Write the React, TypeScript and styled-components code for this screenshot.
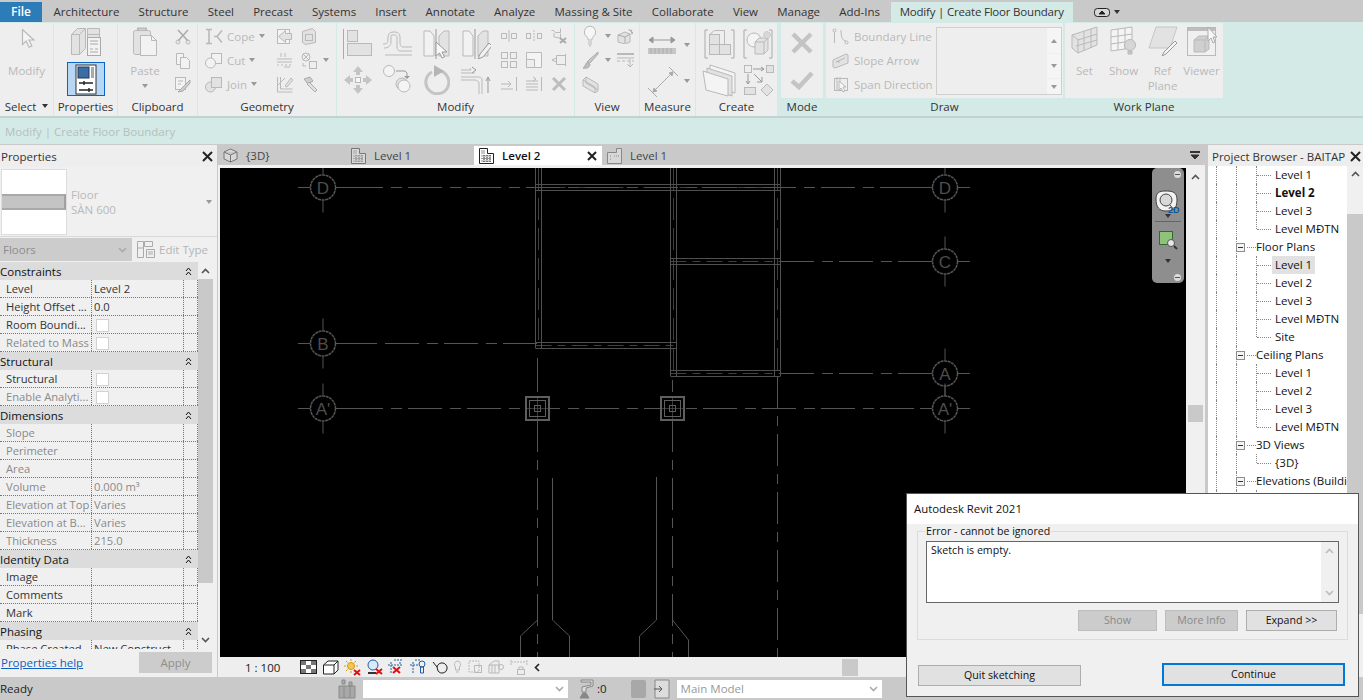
import React from "react";
import styled, { createGlobalStyle } from "styled-components";

const GlobalStyle = createGlobalStyle`
  html, body { margin: 0; padding: 0; height: 100%; overflow: hidden; background: #c9c9c9; }
  body { font-family: "Open Sans", "Noto Sans", sans-serif; font-size: 11.5px; color: #222; }
  * { box-sizing: border-box; }
`;

const Page = styled.div`
  position: relative;
  display: flex;
  flex-direction: column;
  height: 700px;
  width: 1363px;
  overflow: hidden;
`;

/* ---- tab strip ---- */
const TabStrip = styled.div`
  display: flex;
  align-items: stretch;
  height: 22px;
  padding-top: 2px;
  background: #c9c9c9;
`;
const FileTab = styled.div`
  width: 42px;
  margin-right: 2px;
  background: #2b7cb8;
  color: #fff;
  font-weight: 600;
  text-align: center;
  line-height: 20px;
  font-size: 12px;
`;
const Tab = styled.div<{ $active?: boolean }>`
  padding: 0 ${(p) => (p.$active ? 9 : 9.6)}px;
  line-height: 20px;
  white-space: nowrap;
  color: #333;
  letter-spacing: ${(p) => (p.$active ? -0.2 : 0)}px;
  background: ${(p) => (p.$active ? "#d3eae7" : "transparent")};
  margin-left: ${(p) => (p.$active ? 1 : 0)}px;
`;
const ToggleWrap = styled.div`
  display: flex;
  align-items: center;
  gap: 4px;
  margin-left: 21px;
`;

/* ---- ribbon ---- */
const Ribbon = styled.div`
  display: flex;
  height: 96px;
  padding-top: 1px;
  background: #d3eae7;
  border-bottom: 2px solid #c2d2d0;
`;
const Panel = styled.div<{ $w: number; $gap?: number; $tealTitle?: boolean }>`
  display: flex;
  flex-direction: column;
  flex: none;
  width: ${(p) => p.$w}px;
  margin-right: ${(p) => p.$gap ?? 1}px;
  background: ${(p) => (p.$tealTitle ? "transparent" : "#eeeeee")};
`;
const PanelBody = styled.div`
  display: flex;
  height: 75px;
  background: #eeeeee;
  color: #b9b9b9;
`;
const PanelTitle = styled.div`
  display: flex;
  align-items: center;
  justify-content: center;
  gap: 6px;
  height: 18px;
  padding-bottom: 2px;
  color: #333;
  white-space: nowrap;
`;
const Caret = styled.span<{ $dark?: boolean; $up?: boolean }>`
  flex: none;
  display: inline-block;
  width: 0;
  height: 0;
  border-left: 3.5px solid transparent;
  border-right: 3.5px solid transparent;
  border-top: ${(p) => (p.$up ? "0" : `4px solid ${p.$dark ? "#333" : "#999"}`)};
  border-bottom: ${(p) => (p.$up ? `4px solid ${p.$dark ? "#333" : "#999"}` : "0")};
`;
const ToolColumn = styled.div<{ $w?: number }>`
  display: flex;
  flex-direction: column;
  align-items: center;
  width: ${(p) => (p.$w ? `${p.$w}px` : "auto")};
  flex: none;
  padding-top: 3px;
  line-height: 15px;
  text-align: center;
`;
const SelectedTool = styled.div`
  display: flex;
  align-items: center;
  justify-content: center;
  width: 38px;
  height: 34px;
  margin-top: 5px;
  background: #b8d7f3;
  border: 1px solid #0a64c8;
`;
const IconGrid = styled.div<{ $cols: string; $row: number; $top?: number; $left?: number }>`
  display: grid;
  grid-template-columns: ${(p) => p.$cols};
  grid-auto-rows: ${(p) => p.$row}px;
  align-items: center;
  justify-items: center;
  padding-top: ${(p) => p.$top ?? 2}px;
  margin-left: ${(p) => p.$left ?? 0}px;
`;
const ToolRow = styled.div<{ $gap?: number; $left?: number }>`
  display: flex;
  align-items: center;
  justify-self: start;
  gap: ${(p) => p.$gap ?? 4}px;
  margin-left: ${(p) => p.$left ?? 0}px;
  white-space: nowrap;
`;
const ListBox = styled.div`
  display: flex;
  justify-content: flex-end;
  width: 126px;
  height: 68px;
  margin: 4px 0 0 1px;
  border: 1px solid #cfcfcf;
`;
const ListArrows = styled.div`
  display: flex;
  flex-direction: column;
  justify-content: space-between;
  width: 14px;
`;
const ListArrow = styled.div<{ $h: number }>`
  display: flex;
  align-items: center;
  justify-content: center;
  height: ${(p) => p.$h}px;
  background: #f5f5f5;
`;
const ToolLabel = styled.span<{ $top: number }>`
  margin-top: ${(p) => p.$top}px;
`;
const ToolIconSlot = styled.div<{ $h: number }>`
  height: ${(p) => p.$h}px;
`;

/* ---- options bar ---- */
const OptionsBar = styled.div`
  height: 26px;
  padding-left: 5px;
  line-height: 27px;
  background: #d3eae7;
  color: #b5bfbe;
`;

/* ---- work area ---- */
const Workspace = styled.div`
  display: flex;
  flex: 1;
  min-height: 0;
  border-top: 1px solid #c9c9c9;
  background: #c9c9c9;
`;
const PropertiesPanel = styled.div`
  display: flex;
  flex-direction: column;
  flex: none;
  width: 217px;
  background: #f0f0f0;
`;
const DockHeader = styled.div<{ $pad?: number; $h?: number; $inset?: number }>`
  display: flex;
  align-items: center;
  justify-content: space-between;
  flex: none;
  height: ${(p) => p.$h ?? 22}px;
  padding: ${(p) => (p.$h ? 1 : 0)}px ${(p) => p.$pad ?? 4}px 0 ${(p) => p.$inset ?? 1}px;
  background: #eeeeee;
  color: #333;
  white-space: nowrap;
`;
const TypeSelector = styled.div`
  display: flex;
  align-items: center;
  height: 70px;
  padding: 0 5px 0 1px;
  border-bottom: 1px solid #d8d8d8;
`;
const Thumb = styled.div`
  display: flex;
  align-items: center;
  width: 66px;
  height: 66px;
  background: #fff;
  border: 1px solid #dddddd;
`;
const ThumbBand = styled.div`
  width: 100%;
  height: 16px;
  background: #c4c4c4;
  border-top: 2px solid #a9a9a9;
  border-bottom: 2px solid #a9a9a9;
  border-right: 2px solid #a0a0a0;
`;
const TypeName = styled.div`
  flex: 1;
  padding-left: 4px;
  color: #b9b9b9;
  line-height: 15px;
`;
const FilterRow = styled.div`
  display: flex;
  align-items: center;
  height: 25px;
`;
const FilterCombo = styled.div`
  display: flex;
  align-items: center;
  justify-content: space-between;
  width: 132px;
  height: 23px;
  padding: 0 5px 0 3px;
  background: #cccccc;
  color: #8c8c8c;
`;
const EditType = styled.div`
  display: flex;
  align-items: center;
  gap: 4px;
  margin-left: 5px;
  color: #b5b5b5;
`;
const TableWrap = styled.div`
  display: flex;
  height: 387px;
  overflow: hidden;
`;
const Table = styled.div`
  width: 198px;
  flex: none;
`;
const GroupRow = styled.div`
  display: flex;
  align-items: center;
  justify-content: space-between;
  height: 18px;
  padding-right: 6px;
  background: #dcdcdc;
  color: #111;
`;
const Row = styled.div`
  display: grid;
  grid-template-columns: 92px 92px 14px;
  height: 18px;
  border-bottom: 1px dotted #777;
`;
const Cell = styled.div<{ $tone?: string; $ruled?: boolean; $indent?: number }>`
  display: flex;
  align-items: center;
  padding-left: ${(p) => p.$indent ?? 2}px;
  overflow: hidden;
  white-space: nowrap;
  font-size: 11.2px;
  color: ${(p) => p.$tone ?? "#333"};
  border-right: ${(p) => (p.$ruled ? "1px dotted #777" : "0")};
`;
const Check = styled.span`
  width: 13px;
  height: 13px;
  margin-left: 2px;
  margin-top: 2px;
  background: #fff;
  border: 1px solid #d2d2d2;
`;
const VScroll = styled.div<{ $w: number; $bg?: string }>`
  display: flex;
  flex-direction: column;
  flex: none;
  width: ${(p) => p.$w}px;
  background: ${(p) => p.$bg ?? "#f0f0f0"};
`;
const ScrollArrow = styled.div<{ $h?: number; $top?: number; $pin?: boolean }>`
  display: flex;
  align-items: ${(p) => (p.$pin ? "flex-start" : "center")};
  justify-content: center;
  flex: none;
  height: ${(p) => p.$h ?? 17}px;
  margin-top: ${(p) => p.$top ?? 0}px;
  padding-top: ${(p) => (p.$pin ? 5 : 0)}px;
`;
const ScrollThumb = styled.div<{ $h: number; $top?: number; $side?: string }>`
  flex: none;
  height: ${(p) => p.$h}px;
  margin: ${(p) => p.$top ?? 0}px ${(p) => p.$side ?? "0"} 0;
  background: #c9c9c9;
`;
const PanelFooter = styled.div`
  display: flex;
  align-items: center;
  justify-content: space-between;
  flex: 1;
  padding: 0 5px 2px 1px;
`;
const HelpLink = styled.a`
  color: #0f5fc4;
  text-decoration: underline;
`;
const ApplyButton = styled.div`
  width: 73px;
  height: 21px;
  line-height: 21px;
  text-align: center;
  background: #cccccc;
  color: #8f8f8f;
`;

const Center = styled.div`
  display: flex;
  flex-direction: column;
  flex: none;
  width: 987px;
  margin-left: 1px;
`;
const DocTabs = styled.div`
  display: flex;
  height: 20px;
  padding-top: 1px;
  background: #c9c9c9;
`;
const DocTab = styled.div<{ $active?: boolean; $w: number }>`
  display: flex;
  align-items: center;
  gap: 8px;
  flex: none;
  width: ${(p) => p.$w}px;
  padding: 0 5px;
  color: ${(p) => (p.$active ? "#111" : "#444")};
  font-weight: ${(p) => (p.$active ? 600 : 400)};
  background: ${(p) => (p.$active ? "#fff" : "transparent")};
`;
const TabClose = styled.span`
  margin-left: auto;
`;
const TabMenu = styled.div`
  margin-left: auto;
  padding: 0 5px;
  display: flex;
  align-items: center;
`;
const ViewArea = styled.div`
  display: flex;
  flex: 1;
  min-height: 0;
  padding: 3px 0 0 2px;
  background: #f0f0f0;
`;
const ViewColumn = styled.div`
  position: relative;
  display: flex;
  flex-direction: column;
  flex: none;
  width: 966px;
`;
const Canvas = styled.div`
  height: 489px;
  background: #000;
  svg { display: block; }
`;
const ViewBar = styled.div`
  display: flex;
  align-items: center;
  flex: 1;
  padding-left: 25px;
  background: #eeeeee;
`;
const Scale = styled.span`
  width: 55px;
  color: #222;
`;
const ViewBarIcons = styled.div`
  display: flex;
  align-items: center;
  gap: 5.6px;
`;
const HThumb = styled.div`
  width: 16px;
  height: 17px;
  margin-left: 302px;
  background: #c9c9c9;
`;
const NavBar = styled.div`
  position: absolute;
  top: 0;
  right: 2px;
  display: flex;
  flex-direction: column;
  align-items: center;
  width: 32px;
  height: 115px;
  padding-top: 22px;
  background: #8e8e8e;
  border-radius: 5px;
`;
const NavDivider = styled.div`
  width: 26px;
  height: 1px;
  margin: 3px 0 8px;
  background: #666;
`;
const NavSpacer = styled.span`
  height: 9px;
  flex: none;
`;
const NavCorner = styled.span<{ $bottom?: boolean }>`
  position: absolute;
  right: 3px;
  ${(p) => (p.$bottom ? "bottom: 2px;" : "top: 3px;")}
  display: flex;
  align-items: center;
  justify-content: center;
  width: 7px;
  height: 7px;
  border-radius: 50%;
  background: #dcdcdc;
  &::before {
    content: "";
    width: 5px;
    border-top: 1px solid #555;
  }
`;

const Gutter = styled.div`
  width: 3px;
  flex: none;
`;
const BrowserPanel = styled.div`
  display: flex;
  flex-direction: column;
  flex: 1;
  min-width: 0;
`;
const TreeWrap = styled.div`
  display: flex;
  flex: 1;
  min-height: 0;
`;
const Tree = styled.div`
  flex: 1;
  min-width: 0;
  overflow: hidden;
  background: #fff;
`;
const TreeRow = styled.div`
  display: flex;
  align-items: center;
  height: 18px;
  white-space: nowrap;
  color: #111;
`;
const Guide = styled.span<{ $w: number; $on?: boolean }>`
  align-self: stretch;
  flex: none;
  width: ${(p) => p.$w}px;
  border-left: ${(p) => (p.$on ? "1px dotted #888" : "1px solid transparent")};
`;
const Branch = styled.span<{ $last?: boolean }>`
  position: relative;
  align-self: stretch;
  flex: none;
  width: 19px;
  &::before {
    content: "";
    position: absolute;
    left: 0;
    top: 0;
    height: ${(p) => (p.$last ? "9px" : "18px")};
    border-left: 1px dotted #888;
  }
  &::after {
    content: "";
    position: absolute;
    left: 1px;
    top: 9px;
    width: 14px;
    border-top: 1px dotted #888;
  }
`;
const Minus = styled.span`
  position: relative;
  display: flex;
  align-items: center;
  justify-content: center;
  flex: none;
  width: 9px;
  height: 9px;
  margin: 0 2px 0 -5px;
  background: #f4f4f4;
  border: 1px solid #8c8c8c;
  &::before {
    content: "";
    width: 5px;
    border-top: 1px solid #333;
  }
`;
const Dots = styled.span`
  flex: none;
  width: 9px;
  border-top: 1px dotted #888;
`;
const TreeText = styled.span<{ $bold?: boolean; $hl?: boolean }>`
  padding: 0 3px;
  margin-left: -3px;
  line-height: 18px;
  font-weight: ${(p) => (p.$bold ? 700 : 400)};
  background: ${(p) => (p.$hl ? "#e1e1e1" : "transparent")};
`;

/* ---- status bar ---- */
const StatusBar = styled.div`
  display: flex;
  align-items: center;
  flex: none;
  height: 23px;
  background: #c9c9c9;
  color: #222;
`;
const Ready = styled.span`
  width: 338px;
`;
const WhiteCombo = styled.div<{ $w: number }>`
  display: flex;
  align-items: center;
  justify-content: space-between;
  width: ${(p) => p.$w}px;
  height: 18px;
  padding: 0 4px;
  background: #fff;
  color: #999;
`;
const StatusGroup = styled.div<{ $left: number }>`
  display: flex;
  align-items: center;
  gap: 2px;
  margin-left: ${(p) => p.$left}px;
`;
const StatusBox = styled.div`
  width: 15px;
  height: 18px;
  background: #a8a8a8;
  border-radius: 2px;
`;

/* ---- dialog ---- */
const Dialog = styled.div`
  position: absolute;
  left: 906px;
  top: 493px;
  display: flex;
  flex-direction: column;
  width: 453px;
  height: 204px;
  background: #f0f0f0;
  border: 1px solid #555;
  color: #111;
  font-size: 10.6px;
`;
const DialogTitle = styled.div`
  height: 30px;
  padding-left: 7px;
  line-height: 30px;
  font-size: 11.4px;
  background: #fff;
`;
const GroupBox = styled.div`
  position: relative;
  display: flex;
  flex-direction: column;
  height: 109px;
  margin: 7px 10px 0;
  padding: 9px 8px 0;
  border: 1px solid #dcdcdc;
`;
const GroupLegend = styled.span`
  position: absolute;
  left: 7px;
  top: -8px;
  padding: 0 1px;
  line-height: 14px;
  background: #f0f0f0;
`;
const MessageBox = styled.div`
  display: flex;
  justify-content: space-between;
  height: 62px;
  padding-left: 4px;
  line-height: 16px;
  background: #fff;
  border: 1px solid #666;
`;
const MessageScroll = styled.div`
  display: flex;
  flex-direction: column;
  justify-content: space-between;
  width: 17px;
  background: #f0f0f0;
  padding: 6px 0;
  align-items: center;
`;
const GroupButtons = styled.div`
  display: flex;
  justify-content: flex-end;
  gap: 8px;
  margin-top: 7px;
  margin-right: 2px;
`;
const DialogButton = styled.div<{ $w: number; $disabled?: boolean; $primary?: boolean }>`
  width: ${(p) => p.$w}px;
  height: ${(p) => (p.$primary ? 23 : 21)}px;
  line-height: ${(p) => (p.$primary ? 18 : 19)}px;
  text-align: center;
  color: ${(p) => (p.$disabled ? "#8a8a8a" : "#111")};
  background: ${(p) => (p.$disabled ? "#cccccc" : "#e1e1e1")};
  border: ${(p) => (p.$primary ? "2px solid #0078d7" : `1px solid ${p.$disabled ? "#bdbdbd" : "#adadad"}`)};
`;
const DialogFooter = styled.div`
  display: flex;
  justify-content: space-between;
  align-items: flex-start;
  margin-top: 23px;
  padding: 0 13px 0 11px;
`;
const FooterLeft = styled.div`
  margin-top: 2px;
`;

const IconSvg = styled.svg<{ $stroke?: string }>`
  display: block;
  flex: none;
  fill: none;
  stroke: ${(p) => p.$stroke ?? "#b9b9b9"};
  stroke-width: 1;
`;

const Ic = ({ w, h, stroke, children }: { w: number; h: number; stroke?: string; children: React.ReactNode }) => (
  <IconSvg width={w} height={h} viewBox={`0 0 ${w} ${h}`} $stroke={stroke}>
    {children}
  </IconSvg>
);

const fillLight = "#e2e2e2";
const fillMid = "#cfcfcf";

// ribbon icons, all drawn by hand in greyed out state
const CursorIcon = () => (
  <Ic w={22} h={24}>
    <path d="M6.5 3.5v15l3.6-3.4 3 6.2 2.8-1.3-3-6h5z" fill="#f4f4f4" strokeWidth="1.2" />
  </Ic>
);
const CubesIcon = () => (
  <Ic w={32} h={31}>
    <path d="M1.5 8.5l6-6h8v20l-6 6h-8z" fill={fillLight} />
    <path d="M1.5 8.5h8v20M9.5 8.5l6-6" />
    <path d="M17.5 2.5h12v12h-12zM17.5 8.5h12" fill={fillLight} />
    <rect x="17.5" y="11.5" width="13" height="18" fill="#f2f2f2" stroke="#aaa" />
    <path d="M20 15h8M20 18h8M20 23h3M25 23h3M20 26h8" stroke="#aaa" />
  </Ic>
);
const PropertiesIcon = () => (
  <Ic w={22} h={31} stroke="#1e3a5f">
    <rect x="1" y="1" width="20" height="29" fill="#fff" stroke="#333" />
    <rect x="3" y="3" width="11" height="11" fill="#3a6ea5" stroke="#1e3a5f" />
    <rect x="16" y="3" width="3" height="11" fill="#aaa" stroke="none" />
    <path d="M4 19h14M4 26h14M9 17v4M14 24v4" stroke="#222" strokeWidth="1.4" />
  </Ic>
);
const PasteIcon = () => (
  <Ic w={26} h={31}>
    <rect x="1.5" y="4.5" width="17" height="24" rx="2" fill={fillLight} />
    <path d="M6 4.500v-2h8v2" strokeWidth="2" />
    <path d="M8.500 9.500h11l5 5v15h-16z" fill="#f2f2f2" />
    <path d="M19.500 9.500v5h5" />
  </Ic>
);
const ScissorsIcon = () => (
  <Ic w={16} h={16}>
    <path d="M3 1l10 11M13 1L3 12" strokeWidth="1.5" stroke="#aaa" />
    <circle cx="3" cy="13" r="2" />
    <circle cx="13" cy="13" r="2" />
  </Ic>
);
const CopyIcon = () => (
  <Ic w={16} h={16}>
    <path d="M1.500.5h7v11h-7z" fill="#f2f2f2" />
    <path d="M5.500 4.500h6l3 3v8h-9z" fill="#f2f2f2" />
  </Ic>
);
const BrushIcon = () => (
  <Ic w={16} h={16}>
    <rect x="0.500" y="0.500" width="10" height="12" fill="#f2f2f2" />
    <path d="M3 4h5M3 7h3" />
    <path d="M15 3L7 11l-4 4 5-1 7-8z" fill={fillMid} stroke="#aaa" />
  </Ic>
);
const CopeIcon = () => (
  <Ic w={18} h={17}>
    <path d="M1 1.500h6M1 15.500h6M4 1.500v14M12 8.500l5-6M12 8.500l5 6M9 8.500h4" strokeWidth="1.6" />
  </Ic>
);
const CutIcon = () => (
  <Ic w={18} h={17}>
    <rect x="6.500" y="1.500" width="10" height="10" fill="#f2f2f2" />
    <circle cx="5.500" cy="11" r="5" fill="#f2f2f2" />
  </Ic>
);
const JoinIcon = () => (
  <Ic w={18} h={17}>
    <circle cx="5.500" cy="11" r="5" fill={fillLight} />
    <rect x="6.500" y="1.500" width="10" height="10" fill={fillLight} />
  </Ic>
);
const ArrowBoxIcon = () => (
  <Ic w={17} h={17}>
    <rect x="1.500" y="1.500" width="12" height="14" fill="#f4f4f4" />
    <path d="M15.500 5.500h-6v-3l-7 6 7 6v-3h6z" fill={fillLight} />
  </Ic>
);
const BoxPlateIcon = () => (
  <Ic w={15} h={17}>
    <path d="M1.500 3.500l10-3 3 3v11l-10 2-3-2z" fill={fillLight} />
    <rect x="4.500" y="6.500" width="7" height="6" />
  </Ic>
);
const HatchIcon = () => (
  <Ic w={17} h={17}>
    <path d="M1 7h15M1 10h15M1 13h2M5 13h2M9 13h2M13 13h2M5 1v4M9 1v4M8 15h6" />
  </Ic>
);
const ShapesIcon = () => (
  <Ic w={17} h={17}>
    <circle cx="5" cy="5" r="4" />
    <path d="M2 2l6 6M8 2L2 8" />
    <rect x="8.500" y="9.500" width="7" height="7" />
    <path d="M2 11v3h3" />
  </Ic>
);
const GridAngleIcon = () => (
  <Ic w={17} h={17}>
    <path d="M1.500 1v15h15M4.500 1v12h12M1 10l8-8" />
    <path d="M9 10l6-8 2 2-6 7z" fill={fillLight} />
  </Ic>
);
const HammerIcon = () => (
  <Ic w={17} h={17}>
    <path d="M3 3l6-2 3 4-5 3z" fill={fillMid} stroke="#aaa" />
    <path d="M8 6l8 8-2 2-8-8z" fill={fillLight} stroke="#aaa" />
  </Ic>
);
const AlignIcon = () => (
  <Ic w={30} h={30}>
    <path d="M.5 0v30" stroke="#aaa" />
    <rect x="4.500" y="1.500" width="10" height="11" fill={fillLight} />
    <rect x="4.500" y="14.500" width="24" height="12" fill={fillLight} />
  </Ic>
);
const OffsetIcon = () => (
  <Ic w={31} h={26}>
    <path d="M30 16H21c-2 0-3-2-3-4V6c0-3-2-5-5-5H11C8 1 6 3 6 6v3c0 2-1 4-3 4H1" />
    <path d="M30 20H18c-2 0-3-2-3-4V6c0-1-1-2-2-2H10C9 4 9 5 9 6v5c0 4-3 6-7 6" />
    <path d="M30 24H3" />
  </Ic>
);
const MirrorIcon = ({ pen }: { pen?: boolean }) => (
  <Ic w={30} h={30}>
    <path d="M2 2h6l4 5v20H2z" fill="#f2f2f2" />
    <path d="M14 0v30" stroke="#999" />
    <path d="M27 2h-5l-5 5v20h10z" fill={fillLight} />
    {pen ? (
      <path d="M28 14l-9 11-2 5 5-2 9-11z" fill="#f2f2f2" stroke="#999" />
    ) : (
      <path d="M14 13v14l3.500-3 2.500 5 2.500-1-2.500-5h5z" fill="#f8f8f8" stroke="#999" />
    )}
  </Ic>
);
const MoveIcon = () => (
  <Ic w={30} h={30}>
    <path d="M15 1l5 6h-3v3h-4V7h-3zM15 29l5-6h-3v-3h-4v3h-3zM1 15l6-5v3h3v4H7v3zM29 15l-6-5v3h-3v4h3v3z" fill="#c4c4c4" stroke="none" />
    <rect x="12.500" y="12.500" width="5" height="5" fill="#f8f8f8" />
  </Ic>
);
const CopyMoveIcon = () => (
  <Ic w={28} h={30}>
    <circle cx="6" cy="6" r="5.500" fill="#f4f4f4" />
    <path d="M13 6h9l2 2v5" stroke="#999" />
    <path d="M21 11h6l-3 3z" fill="#999" stroke="none" />
    <circle cx="19" cy="19" r="6" fill={fillLight} />
    <circle cx="21" cy="21" r="6" fill="#f4f4f4" />
  </Ic>
);
const RotateIcon = () => (
  <Ic w={27} h={30}>
    <path d="M9 7a11.500 11.500 0 1 0 8-1" strokeWidth="3" stroke="#c4c4c4" />
    <path d="M11 0l10 6-10 6z" fill="#b5b5b5" stroke="none" />
  </Ic>
);
const TrimIcon = () => (
  <Ic w={30} h={30}>
    <path d="M0 8h14M0 5h10l-1-2M0 12h18c2 0 3 1 3 3v14M0 15h14c2 0 4 2 4 3v11" />
    <path d="M11 2l4 3-4 3M27 28V13M25 16l2-4 2 4" stroke="#999" />
  </Ic>
);
const SmallIcon = ({ kind }: { kind: number }) => {
  switch (kind) {
    case 0:
      return (
        <Ic w={16} h={12}>
          <path d="M8 0v12M.5 3.500h5v5h-5zM10.500 3.500h5v5h-5z" />
        </Ic>
      );
    case 1:
      return (
        <Ic w={16} h={12}>
          <rect x=".5" y="3.500" width="4" height="5" />
          <rect x="11.500" y="3.500" width="4" height="5" />
          <path d="M8 0v12" strokeDasharray="2 1" />
        </Ic>
      );
    case 2:
      return (
        <Ic w={16} h={16}>
          <path d="M.5 2.500h2l2 2h5V.5M9.500 10.500v-5M3 5v4l6 1" />
          <path d="M9 10l6 5M15 10l-6 5" strokeWidth="2" stroke="#aaa" />
        </Ic>
      );
    case 3:
      return (
        <Ic w={16} h={16}>
          <rect x=".5" y=".5" width="6" height="6" />
          <rect x="9.500" y=".5" width="6" height="6" />
          <rect x=".5" y="9.500" width="6" height="6" />
          <rect x="9.500" y="9.500" width="6" height="6" />
        </Ic>
      );
    case 4:
      return (
        <Ic w={16} h={16}>
          <path d="M.5 7.500v8h8v-8zM4.500 7.500h4v4" />
          <path d="M.5 .5h15v15h-7v-8h-8z" fill="#f4f4f4" />
        </Ic>
      );
    case 5:
      return (
        <Ic w={15} h={14}>
          <path d="M14.500 1v12M5.500 2.500h9v9h-9zM5.500 5L1 7l4.500 2" />
        </Ic>
      );
    case 6:
      return (
        <Ic w={16} h={16}>
          <path d="M15.500 1v14M0 8h10M7 5l3 3-3 3M0 13h12" />
        </Ic>
      );
    case 7:
      return (
        <Ic w={16} h={16}>
          <path d="M15.500 1v14M0 5h12M0 8h12M0 11h12M0 14h12M7 1l3 2-3 2" />
        </Ic>
      );
    default:
      return (
        <Ic w={14} h={14}>
          <path d="M1 1l12 12M13 1L1 13" strokeWidth="3" stroke="#bdbdbd" />
        </Ic>
      );
  }
};
const BulbIcon = () => (
  <Ic w={14} h={22}>
    <path d="M7 1a6 6 0 0 0-3 11c1 1 1 2 1 3h4c0-1 0-2 1-3A6 6 0 0 0 7 1z" fill="#f6f6f6" />
    <path d="M5 17h4M5 19h4M6 21h2" />
  </Ic>
);
const RenderBoxIcon = () => (
  <Ic w={17} h={15}>
    <path d="M1 6l7-3 5 2v8l-5 2-7-2z" fill={fillLight} />
    <path d="M8 8v6M1 6l7 2 5-3M12 0l1 2 2-1-1 2 2 1-2 1" stroke="#aaa" />
  </Ic>
);
const PaintIcon = () => (
  <Ic w={17} h={18}>
    <path d="M16 1L7 9l-2 2 2 2 2-2 7-8z" fill="#c8c8c8" stroke="#aaa" />
    <path d="M6 11c-3 1-2 4-5 6 4 1 7-1 7-4z" fill="#bdbdbd" stroke="#aaa" />
  </Ic>
);
const LinesIcon = () => (
  <Ic w={17} h={15}>
    <path d="M0 1h17" strokeWidth="2" />
    <path d="M0 5h17M0 8h3M5 8h3M10 8h3M15 8h2M13 6v7M10 11l3 3 3-3" />
  </Ic>
);
const SectionBoxIcon = () => (
  <Ic w={17} h={18}>
    <path d="M1 5l3-3 12 7v7l-3 2L1 11z" fill={fillLight} />
    <path d="M4 2v6l12 7M1 5l12 7v6" />
  </Ic>
);
const DimensionIcon = () => (
  <Ic w={30} h={20}>
    <path d="M2 5h26M2 5l4-3v6zM28 5l-4-3v6z" fill="#999" stroke="#999" />
    <rect x="1" y="13" width="28" height="6" fill="#c6c6c6" stroke="none" />
    <path d="M4 13v6M8 13v6M12 13v6M16 13v6M20 13v6M24 13v6" stroke="#aaa" />
  </Ic>
);
const TagDimIcon = () => (
  <Ic w={31} h={31}>
    <path d="M1 22l9 9M22 1l9 9M6 26L26 6" stroke="#aaa" />
    <path d="M6 26l1-4 3 3zM26 6l-1 4-3-3z" fill="#aaa" stroke="#aaa" />
  </Ic>
);
const ComponentIcon = () => (
  <Ic w={31} h={30}>
    <path d="M4 1H1v28h3M27 1h3v28h-3" stroke="#aaa" />
    <rect x="5.500" y="5.500" width="10" height="10" fill={fillLight} />
    <rect x="15.500" y="15.500" width="11" height="10" fill={fillLight} />
    <rect x="5.500" y="15.500" width="10" height="10" fill={fillLight} />
    <path d="M5.500 5.500l5-4h10v14" />
  </Ic>
);
const InPlaceIcon = () => (
  <Ic w={30} h={30}>
    <path d="M4 1H1v28h3M26 1h3v28h-3" stroke="#aaa" />
    <circle cx="11" cy="11" r="7" fill="#f4f4f4" />
    <path d="M12 13l4-4h9v12l-4 4h-9z" fill={fillLight} />
    <path d="M12 13h9v12M21 13l4-4" />
    <circle cx="24" cy="6" r="3.500" fill="#d8d8d8" strokeDasharray="1 1" />
  </Ic>
);
const SheetsIcon = () => (
  <Ic w={34} h={33}>
    <path d="M8 1l25 8v20L8 21z" fill="#f4f4f4" />
    <path d="M5 4l25 8v20L5 24z" fill={fillLight} />
    <path d="M1 7l25 8v17L4 26z" fill="#f4f4f4" />
  </Ic>
);
const ModelGroupIcon = () => (
  <Ic w={31} h={33}>
    <rect x="1.500" y="1.500" width="7" height="7" />
    <rect x="23.500" y="1.500" width="7" height="7" fill={fillLight} />
    <path d="M10 5h11M18 3l3 2-3 2" stroke="#999" />
    <path d="M5 10v10M3 17l2 3 2-3M11 10l8 8M19 13v5h-5" stroke="#999" />
    <rect x="1.500" y="23.500" width="11" height="7" fill={fillLight} />
    <path d="M24 20l6 6-6 6-6-6z" fill={fillLight} />
  </Ic>
);
const CancelIcon = () => (
  <Ic w={24} h={24}>
    <path d="M3 3l18 18M21 3L3 21" strokeWidth="4.500" stroke="#c4c4c4" />
  </Ic>
);
const FinishIcon = () => (
  <Ic w={24} h={20}>
    <path d="M2 11l7 6L22 3" strokeWidth="4.500" stroke="#c4c4c4" />
  </Ic>
);
const BoundaryIcon = () => (
  <Ic w={17} h={17}>
    <circle cx="2.500" cy="2.500" r="1.500" />
    <circle cx="14.500" cy="14.500" r="1.500" />
    <path d="M2.500 4v11M9 2c0 8 2 11 5 11" />
  </Ic>
);
const SlopeIcon = () => (
  <Ic w={17} h={17}>
    <path d="M1 8l13-6 2 1v8L3 16l-2-1z" fill={fillLight} />
    <path d="M4 10l9-4M4 10l3-1v2" />
  </Ic>
);
const SpanIcon = () => (
  <Ic w={17} h={17}>
    <rect x="2.500" y="2.500" width="13" height="12" />
    <path d="M5 1v14M8 1v14" />
    <path d="M7 5v9l2-2 2 4 2-1-2-4h3z" fill="#f6f6f6" />
  </Ic>
);
const PlaneSetIcon = () => (
  <Ic w={27} h={28}>
    <path d="M1 9l25-8v18L7 27l-6-5z" fill={fillLight} />
    <path d="M1 9l6 5v13M7 14l19-6M5 20l21-6M13 5v20M20 3v19" />
  </Ic>
);
const PlaneShowIcon = () => (
  <Ic w={28} h={29}>
    <path d="M1 4l21-3v21L1 25z" fill="#f4f4f4" />
    <path d="M1 11l21-3M1 18l21-3M8 3v21M15 2v21" />
    <circle cx="20" cy="19" r="5.500" fill="#d6d6d6" />
    <path d="M18 25h4v3h-4z" fill="#c6c6c6" />
  </Ic>
);
const RefPlaneIcon = () => (
  <Ic w={31} h={30}>
    <path d="M9 1h21l-7 21H2z" fill={fillLight} stroke="#c6c6c6" />
    <path d="M28 15L17 26l-2 4 4-2 11-11z" fill="#f4f4f4" stroke="#999" />
  </Ic>
);
const ViewerIcon = () => (
  <Ic w={30} h={30}>
    <rect x=".5" y="1.500" width="28" height="28" fill="#f0f0f0" />
    <rect x="1" y="2" width="27" height="3" fill="#bdbdbd" stroke="none" />
    <path d="M7 14l5-4h10v13l-4 3H7z" fill="#cfcfcf" />
    <path d="M7 14h11v12M18 14l4-4" />
    <path d="M21 1v14l3-3 2 5 2-1-2-5h4z" fill="#f8f8f8" stroke="#aaa" />
  </Ic>
);

const Closer = ({ size = 11, stroke = "#222" }: { size?: number; stroke?: string }) => (
  <Ic w={size} h={size} stroke={stroke}>
    <path d={`M1 1L${size - 1} ${size - 1}M${size - 1} 1L1 ${size - 1}`} strokeWidth="2" />
  </Ic>
);
const Chevron = ({ up = true, stroke = "#555" }: { up?: boolean; stroke?: string }) => (
  <Ic w={9} h={6} stroke={stroke}>
    <path d={up ? "M1 5l3.500-3.500L8 5" : "M1 1l3.500 3.500L8 1"} strokeWidth="1.6" />
  </Ic>
);
const DoubleChevron = () => (
  <Ic w={7} h={9} stroke="#111">
    <path d="M1 4l2.500-3L6 4M1 8l2.500-3L6 8" />
  </Ic>
);
const Cube3dTabIcon = () => (
  <Ic w={15} h={15} stroke="#777">
    <path d="M7.500 1L14 4v7l-6.500 3L1 11V4zM1 4l6.500 3L14 4M7.500 7v7" fill="#d8d8d8" />
  </Ic>
);
const PlanTabIcon = ({ dark }: { dark?: boolean }) => (
  <Ic w={15} h={16} stroke={dark ? "#222" : "#777"}>
    <path d="M.5 .5h8v5h6v10h-14z" fill={dark ? "#fff" : "#d8d8d8"} />
    <path d="M2.500 3h4M2.500 5h4M2.500 8h10M2.500 10.500h10M2.500 13h10M5 7v8M8 7v8M11 7v8" strokeDasharray="1 1" />
  </Ic>
);
const ElevTabIcon = () => (
  <Ic w={15} h={16} stroke="#888">
    <path d="M.5 4.500h9v-4h5v15h-14z" fill="#d8d8d8" />
    <path d="M3 8h2M3 11h2M7 8h5" strokeDasharray="1 1" />
  </Ic>
);
const MenuLines = () => (
  <Ic w={10} h={9} stroke="#333">
    <path d="M0 1h10" strokeWidth="2" />
    <path d="M1 4h8l-4 4z" fill="#333" />
  </Ic>
);
const RibbonToggle = () => (
  <Ic w={16} h={9} stroke="#222">
    <rect x=".5" y=".5" width="15" height="8" rx="3" fill="#d8d8d8" />
    <path d="M5 6l3-3 3 3z" fill="#222" />
  </Ic>
);

const WheelIcon = () => (
  <Ic w={26} h={24} stroke="#444">
    <path d="M1 9C1 3 4 1 10 1c8 0 12 1 12 9 0 8-3 11-11 11C4 21 1 17 1 9z" fill="#f2f2f2" />
    <circle cx="11" cy="10" r="6" fill="#d8d8d8" />
    <path d="M15 15l4 5" />
    <text x="13" y="23" fontFamily="Liberation Sans, sans-serif" fontSize="9" fontWeight="700" fill="#0f55a5" stroke="none">2D</text>
  </Ic>
);
const ZoomIcon = () => (
  <Ic w={20} h={20} stroke="#2f6b2a">
    <rect x="1.500" y="1.500" width="13" height="13" fill="#8fc27a" />
    <circle cx="13" cy="13" r="3.500" fill="#e8e8e8" stroke="#555" />
    <path d="M16 16l3 3" stroke="#333" strokeWidth="2" />
  </Ic>
);

const DarkCaret = styled(Caret)`
  margin: 6px 0 0;
`;

// view control bar icons
const ViewBarSet = () => (
  <ViewBarIcons>
    <Ic w={17} h={14} stroke="#222">
      <rect x=".5" y=".5" width="16" height="13" fill="#fff" />
      <path d="M1 1h5v4H1zM11 1h5v4h-5zM6 5h5v4H6zM1 9h5v4H1zM11 9h5v4h-5z" fill="#777" stroke="none" />
    </Ic>
    <Ic w={16} h={15} stroke="#222">
      <path d="M.5 5L5 1h10v9l-4 4H.5zM.5 5H11v9M11 5l4-4" fill="#fff" />
    </Ic>
    <Ic w={17} h={17} stroke="#d49a10">
      <circle cx="7" cy="7" r="3.500" fill="#f2c94c" />
      <path d="M7 0v2M7 12v2M0 7h2M12 7h2M2 2l1.500 1.500M12 2l-1.500 1.500M2 12l1.500-1.500" />
      <path d="M10 11l6 5M16 11l-6 5" stroke="#d11" strokeWidth="2" />
    </Ic>
    <Ic w={16} h={16} stroke="#1c5fa8">
      <circle cx="6" cy="6" r="5" fill="#dbeafa" />
      <path d="M1 14h8" stroke="#333" strokeWidth="2" />
      <path d="M9 10l6 5M15 10l-6 5" stroke="#d11" strokeWidth="2" />
    </Ic>
    <Ic w={16} h={16} stroke="#1c5fa8">
      <path d="M0 6h14M3 3v12M6 1h8M12 3v3" strokeDasharray="2 1" />
      <path d="M5 8l7 6M12 8l-7 6" stroke="#d11" strokeWidth="2" />
    </Ic>
    <Ic w={16} h={16} stroke="#1c5fa8">
      <path d="M0 6h8M3 3v12M5 1h6" strokeDasharray="2 1" />
      <circle cx="12" cy="5" r="3" />
      <path d="M10.500 8h3v6h-3z" />
    </Ic>
    <Ic w={16} h={13} stroke="#222">
      <path d="M1 1l4 5a5 5 0 0 1 10 2 5 5 0 0 1-9 2L5 6" />
    </Ic>
    <Ic w={9} h={14}>
      <path d="M4.500 1a3.500 3.500 0 0 0-2 6v3h4V7a3.500 3.500 0 0 0-2-6zM3 12h3" />
    </Ic>
    <Ic w={15} h={14}>
      <path d="M1 1h10v11H1z" strokeDasharray="2 1" />
      <rect x="6.500" y="5.500" width="7" height="7" />
    </Ic>
    <Ic w={16} h={14}>
      <path d="M1 5l5-4h5v12H1zM1 5h10M4 5v8M7 5v8" />
      <circle cx="13" cy="7" r="2.500" />
    </Ic>
    <Ic w={18} h={15}>
      <path d="M1 0v5M17 0v5M1 2h16" strokeDasharray="2 1" />
      <rect x="7.500" y="9.500" width="7" height="5" />
      <path d="M9 9V7h4v2" />
    </Ic>
    <Ic w={6} h={9} stroke="#222">
      <path d="M5 1L1.500 4.500 5 8" strokeWidth="1.6" />
    </Ic>
  </ViewBarIcons>
);

// the drawing shown on the canvas
const gridLine = "#555555";
const Bubble = ({ x, y, label }: { x: number; y: number; label: string }) => (
  <g>
    <circle cx={x} cy={y} r={12.5} stroke={gridLine} strokeWidth="1.5" strokeDasharray="3 .6" fill="#000" />
    <path d={`M${x} ${y - 25}v12M${x} ${y + 13}v12M${x - 25} ${y}h12M${x + 13} ${y}h12`} stroke={gridLine} />
    <text x={x} y={y + 6} textAnchor="middle" fontFamily="Liberation Sans, sans-serif" fontSize="17" fill="#4d4d4d" stroke="none">
      {label}
    </text>
  </g>
);
const Column = ({ x, y }: { x: number; y: number }) => (
  <g stroke="#5f5f5f" fill="#000">
    <rect x={x - 11.5} y={y - 11.5} width={23} height={23} strokeWidth="2" />
    <rect x={x - 8} y={y - 8} width={16} height={16} />
    <rect x={x - 3} y={y - 3} width={6} height={6} />
    <path d={`M${x - 11} ${y}h22M${x} ${y - 11}v22`} strokeWidth=".6" />
  </g>
);
const WallH = ({ x1, x2, y }: { x1: number; x2: number; y: number }) => (
  <g stroke="#505050">
    <path d={`M${x1} ${y}H${x2}M${x1} ${y + 6}H${x2}`} />
    <path d={`M${x1} ${y + 3}H${x2}`} strokeDasharray="16 6 8 6" strokeWidth=".8" />
  </g>
);
const WallV = ({ x, y1, y2 }: { x: number; y1: number; y2: number }) => (
  <g stroke="#505050">
    <path d={`M${x} ${y1}V${y2}M${x + 6} ${y1}V${y2}`} />
    <path d={`M${x + 3} ${y1}V${y2}`} strokeDasharray="22 8" strokeWidth=".8" />
  </g>
);
const DrawingSvg = styled.svg`
  fill: none;
  stroke-width: 1;
`;
const Drawing = () => (
  <DrawingSvg width={966} height={489} viewBox="220 168 966 489">
    <g stroke={gridLine}>
      <path d="M348 187.500H383M938 187.500H905" />
      <path d="M391 187.500H960" strokeDasharray="11 6 34 8" />
      <path d="M348 343.500H377M385 343.500H540" strokeDasharray="34 8 11 6" />
      <path d="M348 408.500H383" />
      <path d="M391 408.500H920" strokeDasharray="11 6 34 8" />
      <path d="M780 261.500H920" strokeDasharray="34 8 11 6" />
      <path d="M780 373.500H920" strokeDasharray="34 8 11 6" />
      <path d="M537.500 358V392M672.500 380V392" />
      <path d="M537.500 420V657M672.500 420V657M777.500 376V657" strokeDasharray="32 8 10 8" />
      <path d="M552.500 478V620L569.500 636V657M656.500 477V620L639.500 636V657M672.500 620L688.500 640V657M537.500 620L520.500 636V657" />
    </g>
    <WallH x1={535.5} x2={780.5} y={184.5} />
    <WallV x={535.5} y1={168} y2={348} />
    <WallV x={670.5} y1={168} y2={376} />
    <WallV x={774.5} y1={168} y2={376} />
    <WallH x1={535.5} x2={676.5} y={342.5} />
    <WallH x1={670.5} x2={780.5} y={258.5} />
    <WallH x1={670.5} x2={780.5} y={370.5} />
    <Column x={537.5} y={408.5} />
    <Column x={672.5} y={408.5} />
    <Bubble x={323} y={187.5} label="D" />
    <Bubble x={323} y={343.5} label="B" />
    <Bubble x={323} y={408.5} label="A'" />
    <Bubble x={945} y={187.5} label="D" />
    <Bubble x={945} y={261.5} label="C" />
    <Bubble x={945} y={373.5} label="A" />
    <Bubble x={945} y={408.5} label="A'" />
  </DrawingSvg>
);

const ribbonTabs = ["Architecture", "Structure", "Steel", "Precast", "Systems", "Insert", "Annotate", "Analyze", "Massing & Site", "Collaborate", "View", "Manage", "Add-Ins"];

type PropRow = { group?: string; name?: string; value?: string; check?: boolean; dim?: boolean; valueDim?: boolean };
const propRows: PropRow[] = [
  { group: "Constraints" },
  { name: "Level", value: "Level 2" },
  { name: "Height Offset ...", value: "0.0" },
  { name: "Room Boundi...", check: true },
  { name: "Related to Mass", check: true, dim: true },
  { group: "Structural" },
  { name: "Structural", check: true },
  { name: "Enable Analyti...", check: true, dim: true },
  { group: "Dimensions" },
  { name: "Slope", dim: true },
  { name: "Perimeter", dim: true },
  { name: "Area", dim: true },
  { name: "Volume", value: "0.000 m³", dim: true, valueDim: true },
  { name: "Elevation at Top", value: "Varies", dim: true, valueDim: true },
  { name: "Elevation at B...", value: "Varies", dim: true, valueDim: true },
  { name: "Thickness", value: "215.0", dim: true, valueDim: true },
  { group: "Identity Data" },
  { name: "Image" },
  { name: "Comments" },
  { name: "Mark" },
  { group: "Phasing" },
  { name: "Phase Created", value: "New Construct..." },
];

type TreeItem = { text: string; head?: boolean; last?: boolean; bold?: boolean; hl?: boolean };
const treeItems: TreeItem[] = [
  { text: "Level 1" },
  { text: "Level 2", bold: true },
  { text: "Level 3" },
  { text: "Level MĐTN", last: true },
  { text: "Floor Plans", head: true },
  { text: "Level 1", hl: true },
  { text: "Level 2" },
  { text: "Level 3" },
  { text: "Level MĐTN" },
  { text: "Site", last: true },
  { text: "Ceiling Plans", head: true },
  { text: "Level 1" },
  { text: "Level 2" },
  { text: "Level 3" },
  { text: "Level MĐTN", last: true },
  { text: "3D Views", head: true },
  { text: "{3D}", last: true },
  { text: "Elevations (Building Elevation)", head: true },
  { text: "" },
];

export default function App() {
  return (
    <Page>
      <GlobalStyle />
      <TabStrip>
        <FileTab>File</FileTab>
        {ribbonTabs.map((t) => (
          <Tab key={t}>{t}</Tab>
        ))}
        <Tab $active>Modify | Create Floor Boundary</Tab>
        <ToggleWrap>
          <RibbonToggle />
          <Caret $dark />
        </ToggleWrap>
      </TabStrip>

      <Ribbon>
        <Panel $w={53}>
          <PanelBody>
            <ToolColumn $w={53}>
              <ToolIconSlot $h={37}>
                <CursorIcon />
              </ToolIconSlot>
              <span>Modify</span>
            </ToolColumn>
          </PanelBody>
          <PanelTitle>
            Select <Caret $dark />
          </PanelTitle>
        </Panel>

        <Panel $w={63}>
          <PanelBody>
            <ToolColumn $w={63}>
              <CubesIcon />
              <SelectedTool>
                <PropertiesIcon />
              </SelectedTool>
            </ToolColumn>
          </PanelBody>
          <PanelTitle>Properties</PanelTitle>
        </Panel>

        <Panel $w={79}>
          <PanelBody>
            <ToolColumn $w={54}>
              <PasteIcon />
              <ToolLabel $top={6}>Paste</ToolLabel>
              <DarkCaret />
            </ToolColumn>
            <IconGrid $cols="22px" $row={24}>
              <ScissorsIcon />
              <CopyIcon />
              <BrushIcon />
            </IconGrid>
          </PanelBody>
          <PanelTitle>Clipboard</PanelTitle>
        </Panel>

        <Panel $w={138}>
          <PanelBody>
            <IconGrid $cols="66px 26px 36px" $row={24} $top={1} $left={7}>
              <ToolRow>
                <CopeIcon /> Cope <Caret />
              </ToolRow>
              <ArrowBoxIcon />
              <ToolRow $left={4}>
                <BoxPlateIcon />
              </ToolRow>
              <ToolRow>
                <CutIcon /> Cut <Caret />
              </ToolRow>
              <HatchIcon />
              <ToolRow $gap={5} $left={4}>
                <ShapesIcon /> <Caret />
              </ToolRow>
              <ToolRow>
                <JoinIcon /> Join <Caret />
              </ToolRow>
              <GridAngleIcon />
              <ToolRow $left={4}>
                <HammerIcon />
              </ToolRow>
            </IconGrid>
          </PanelBody>
          <PanelTitle>Geometry</PanelTitle>
        </Panel>

        <Panel $w={237}>
          <PanelBody>
            <IconGrid $cols="repeat(4, 39.500px)" $row={36} $top={3} $left={1}>
              <AlignIcon />
              <OffsetIcon />
              <MirrorIcon />
              <MirrorIcon pen />
              <MoveIcon />
              <CopyMoveIcon />
              <RotateIcon />
              <TrimIcon />
            </IconGrid>
            <IconGrid $cols="repeat(3, 25px)" $row={24} $top={1}>
              <SmallIcon kind={0} />
              <SmallIcon kind={1} />
              <SmallIcon kind={2} />
              <SmallIcon kind={3} />
              <SmallIcon kind={4} />
              <SmallIcon kind={5} />
              <SmallIcon kind={6} />
              <SmallIcon kind={7} />
              <SmallIcon kind={8} />
            </IconGrid>
          </PanelBody>
          <PanelTitle>Modify</PanelTitle>
        </Panel>

        <Panel $w={64}>
          <PanelBody>
            <IconGrid $cols="38px 24px" $row={24} $top={1}>
              <ToolRow $gap={8} $left={8}>
                <BulbIcon /> <Caret />
              </ToolRow>
              <RenderBoxIcon />
              <ToolRow $gap={6} $left={7}>
                <PaintIcon /> <Caret />
              </ToolRow>
              <LinesIcon />
              <ToolRow $left={7}>
                <SectionBoxIcon />
              </ToolRow>
            </IconGrid>
          </PanelBody>
          <PanelTitle>View</PanelTitle>
        </Panel>

        <Panel $w={55}>
          <PanelBody>
            <IconGrid $cols="55px" $row={36} $top={4}>
              <ToolRow $gap={7} $left={7}>
                <DimensionIcon /> <Caret />
              </ToolRow>
              <ToolRow $gap={6} $left={7}>
                <TagDimIcon /> <Caret />
              </ToolRow>
            </IconGrid>
          </PanelBody>
          <PanelTitle>Measure</PanelTitle>
        </Panel>

        <Panel $w={81} $gap={4}>
          <PanelBody>
            <IconGrid $cols="42px 36px" $row={36} $top={3} $left={2}>
              <ComponentIcon />
              <InPlaceIcon />
              <SheetsIcon />
              <ModelGroupIcon />
            </IconGrid>
          </PanelBody>
          <PanelTitle>Create</PanelTitle>
        </Panel>

        <Panel $w={42} $gap={3} $tealTitle>
          <PanelBody>
            <IconGrid $cols="42px" $row={37} $top={1}>
              <CancelIcon />
              <FinishIcon />
            </IconGrid>
          </PanelBody>
          <PanelTitle>Mode</PanelTitle>
        </Panel>

        <Panel $w={237} $gap={2} $tealTitle>
          <PanelBody>
            <IconGrid $cols="103px" $row={24} $top={1} $left={6}>
              <ToolRow $gap={5}>
                <BoundaryIcon /> Boundary Line
              </ToolRow>
              <ToolRow $gap={5}>
                <SlopeIcon /> Slope Arrow
              </ToolRow>
              <ToolRow $gap={5}>
                <SpanIcon /> Span Direction
              </ToolRow>
            </IconGrid>
            <ListBox>
              <ListArrows>
                <ListArrow $h={25}>
                  <Caret $up />
                </ListArrow>
                <ListArrow $h={24}>
                  <Caret />
                </ListArrow>
                <ListArrow $h={15}>
                  <Caret />
                </ListArrow>
              </ListArrows>
            </ListBox>
          </PanelBody>
          <PanelTitle>Draw</PanelTitle>
        </Panel>

        <Panel $w={158} $tealTitle>
          <PanelBody>
            <ToolColumn $w={39}>
              <PlaneSetIcon />
              <ToolLabel $top={9}>Set</ToolLabel>
            </ToolColumn>
            <ToolColumn $w={39}>
              <PlaneShowIcon />
              <ToolLabel $top={8}>Show</ToolLabel>
            </ToolColumn>
            <ToolColumn $w={39}>
              <RefPlaneIcon />
              <ToolLabel $top={7}>
                Ref
                <br />
                Plane
              </ToolLabel>
            </ToolColumn>
            <ToolColumn $w={39}>
              <ViewerIcon />
              <ToolLabel $top={7}>Viewer</ToolLabel>
            </ToolColumn>
          </PanelBody>
          <PanelTitle>Work Plane</PanelTitle>
        </Panel>
      </Ribbon>

      <OptionsBar>Modify | Create Floor Boundary</OptionsBar>

      <Workspace>
        <PropertiesPanel>
          <DockHeader>
            Properties <Closer />
          </DockHeader>
          <TypeSelector>
            <Thumb>
              <ThumbBand />
            </Thumb>
            <TypeName>
              Floor
              <br />
              SÀN 600
            </TypeName>
            <Caret />
          </TypeSelector>
          <FilterRow>
            <FilterCombo>
              Floors <Chevron up={false} stroke="#aaa" />
            </FilterCombo>
            <EditType>
              <Ic w={18} h={17} stroke="#aaa">
                <path d="M.5.5h6v16h-6zM7.500.5h8v5h-8zM.5 7h6M9.500 8.500h8v8h-8zM11 11h5M11 13h5" />
              </Ic>
              Edit Type
            </EditType>
          </FilterRow>
          <TableWrap>
            <Table>
              {propRows.map((r, i) =>
                r.group ? (
                  <GroupRow key={i}>
                    {r.group} <DoubleChevron />
                  </GroupRow>
                ) : (
                  <Row key={i}>
                    <Cell $ruled $indent={6} $tone={r.dim ? "#8a8a8a" : "#333"}>
                      {r.name}
                    </Cell>
                    <Cell $ruled $tone={r.valueDim ? "#8a8a8a" : "#333"}>
                      {r.check ? <Check /> : r.value}
                    </Cell>
                    <Cell $ruled />
                  </Row>
                )
              )}
            </Table>
            <VScroll $w={15}>
              <ScrollArrow>
                <Chevron />
              </ScrollArrow>
              <ScrollThumb $h={304} />
              <ScrollArrow $top={48}>
                <Chevron up={false} />
              </ScrollArrow>
            </VScroll>
          </TableWrap>
          <PanelFooter>
            <HelpLink>Properties help</HelpLink>
            <ApplyButton>Apply</ApplyButton>
          </PanelFooter>
        </PropertiesPanel>

        <Center>
          <DocTabs>
            <DocTab $w={128}>
              <Cube3dTabIcon /> {"{3D}"}
            </DocTab>
            <DocTab $w={128}>
              <PlanTabIcon /> Level 1
            </DocTab>
            <DocTab $active $w={128}>
              <PlanTabIcon dark /> Level 2
              <TabClose>
                <Closer size={10} />
              </TabClose>
            </DocTab>
            <DocTab $w={100}>
              <ElevTabIcon /> Level 1
            </DocTab>
            <TabMenu>
              <MenuLines />
            </TabMenu>
          </DocTabs>
          <ViewArea>
            <ViewColumn>
              <Canvas>
                <Drawing />
              </Canvas>
              <ViewBar>
                <Scale>1 : 100</Scale>
                <ViewBarSet />
                <HThumb />
              </ViewBar>
              <NavBar>
                <NavCorner />
                <WheelIcon />
                <Caret $dark />
                <NavDivider />
                <ZoomIcon />
                <NavSpacer />
                <Caret $dark />
                <NavCorner $bottom />
              </NavBar>
            </ViewColumn>
            <VScroll $w={19}>
              <ScrollArrow $h={18}>
                <Chevron />
              </ScrollArrow>
              <ScrollThumb $h={17} $top={219} $side="2px" />
            </VScroll>
          </ViewArea>
        </Center>

        <Gutter />

        <BrowserPanel>
          <DockHeader $pad={2} $h={21} $inset={4}>
            Project Browser - BAITAP <Closer />
          </DockHeader>
          <TreeWrap>
            <Tree>
              {treeItems.map((t, i) => (
                <TreeRow key={i}>
                  <Guide $w={8} />
                  <Guide $w={20} $on />
                  {t.head ? (
                    <>
                      <Guide $w={5} $on />
                      <Minus />
                      <Dots />
                      <TreeText>{t.text}</TreeText>
                    </>
                  ) : (
                    <>
                      <Guide $w={20} $on />
                      <Branch $last={t.last} />
                      <TreeText $bold={t.bold} $hl={t.hl}>
                        {t.text}
                      </TreeText>
                    </>
                  )}
                </TreeRow>
              ))}
            </Tree>
            <VScroll $w={16}>
              <ScrollArrow $h={48} $pin>
                <Chevron />
              </ScrollArrow>
              <ScrollThumb $h={400} />
            </VScroll>
          </TreeWrap>
        </BrowserPanel>
      </Workspace>

      <StatusBar>
        <Ready>Ready</Ready>
        <Ic w={18} h={20} stroke="#8a8a8a">
          <path d="M4 1h3v4H4zM11 3h3v4h-3zM1 7h16v12H1zM6 7v12M12 7v12" fill="#a8a8a8" />
        </Ic>
        <StatusGroup $left={7}>
          <WhiteCombo $w={205}>
            <span />
            <Chevron up={false} stroke="#aaa" />
          </WhiteCombo>
        </StatusGroup>
        <StatusGroup $left={9}>
          <Ic w={18} h={20} stroke="#888">
            <path d="M4 1h12v6l-7 2v4H5V8l9-2V3H4z" fill="#ddd" />
            <path d="M3 19l3-5h3l3 5z" fill="#888" />
          </Ic>
          <span>:0</span>
        </StatusGroup>
        <StatusGroup $left={24}>
          <StatusBox />
        </StatusGroup>
        <StatusGroup $left={7}>
          <Ic w={17} h={20} stroke="#888">
            <path d="M2 1h14v18H2z" fill="#ddd" />
            <path d="M1 10h8M6 7l3 3-3 3" stroke="#555" />
          </Ic>
        </StatusGroup>
        <StatusGroup $left={7}>
          <WhiteCombo $w={205}>
            <span>Main Model</span>
            <Chevron up={false} stroke="#aaa" />
          </WhiteCombo>
        </StatusGroup>
      </StatusBar>

      <Dialog>
        <DialogTitle>Autodesk Revit 2021</DialogTitle>
        <GroupBox>
          <GroupLegend>Error - cannot be ignored</GroupLegend>
          <MessageBox>
            <span>Sketch is empty.</span>
            <MessageScroll>
              <Chevron stroke="#bbb" />
              <Chevron up={false} stroke="#bbb" />
            </MessageScroll>
          </MessageBox>
          <GroupButtons>
            <DialogButton $w={79} $disabled>
              Show
            </DialogButton>
            <DialogButton $w={73} $disabled>
              More Info
            </DialogButton>
            <DialogButton $w={91}>Expand &gt;&gt;</DialogButton>
          </GroupButtons>
        </GroupBox>
        <DialogFooter>
          <FooterLeft>
            <DialogButton $w={163}>Quit sketching</DialogButton>
          </FooterLeft>
          <DialogButton $w={183} $primary>
            Continue
          </DialogButton>
        </DialogFooter>
      </Dialog>
    </Page>
  );
}
